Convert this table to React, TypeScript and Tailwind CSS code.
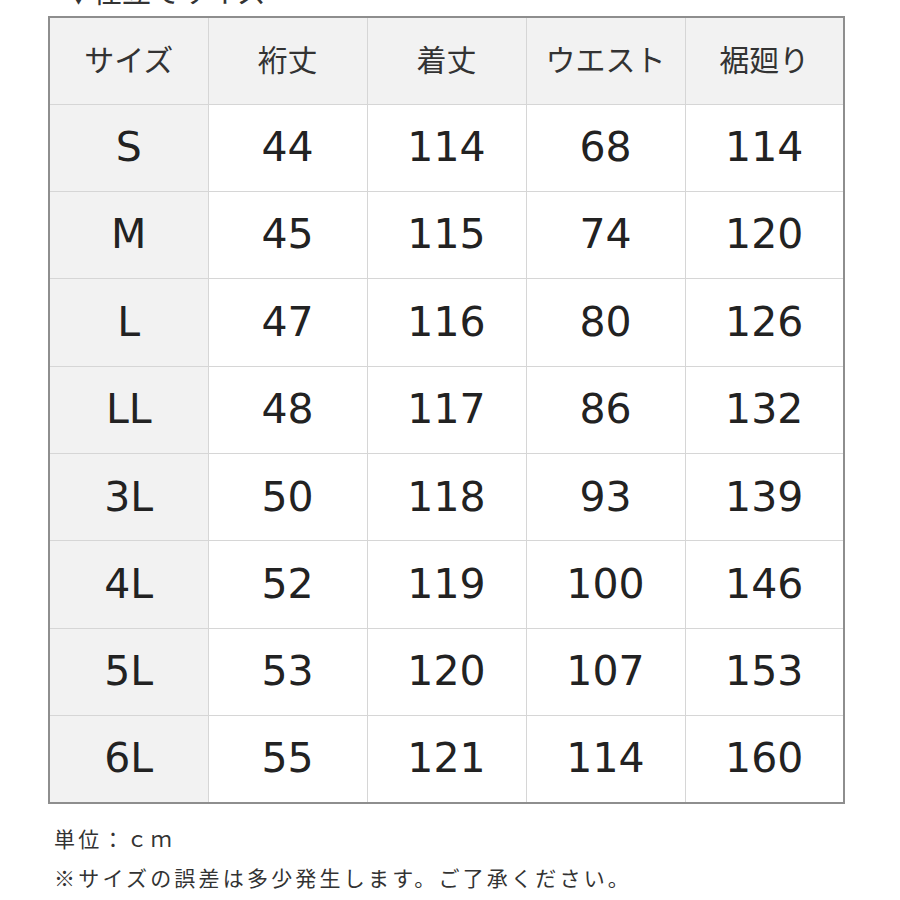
const headers = ['サイズ', '裄丈', '着丈', 'ウエスト', '裾廻り'];

const rows: [string, number, number, number, number][] = [
  ['S', 44, 114, 68, 114],
  ['M', 45, 115, 74, 120],
  ['L', 47, 116, 80, 126],
  ['LL', 48, 117, 86, 132],
  ['3L', 50, 118, 93, 139],
  ['4L', 52, 119, 100, 146],
  ['5L', 53, 120, 107, 153],
  ['6L', 55, 121, 114, 160],
];

const jp = { fontFamily: '"Noto Sans CJK JP", sans-serif' };
const num = { fontFamily: '"DejaVu Sans", "Noto Sans CJK JP", sans-serif' };

export default function App() {
  return (
    <div className="w-[900px] h-[900px] bg-white overflow-hidden text-[#222]">
      {/* title, cut off by the top edge */}
      <div className="pl-[64px] -mt-[28px] h-[44px] text-[29px] leading-[36px] text-[#333]" style={jp}>
        ▼仕立てサイズ
      </div>

      <div className="pl-[48px]">
        <table className="w-[797px] table-fixed border-collapse border-2 border-[#8e8e8e]">
          <thead>
            <tr className="h-[87px] bg-[#f2f2f2]">
              {headers.map((h) => (
                <th
                  key={h}
                  className="border border-[#d6d6d6] text-[30px] font-normal text-[#333] text-center align-middle pb-[4px]"
                  style={jp}
                >
                  {h}
                </th>
              ))}
            </tr>
          </thead>
          <tbody>
            {rows.map((r) => (
              <tr key={r[0]} className="h-[87.4px]">
                {r.map((v, i) => (
                  <td
                    key={i}
                    className={`border border-[#d6d6d6] text-[41px] text-center align-middle ${
                      i === 0 ? 'bg-[#f2f2f2]' : 'bg-white'
                    }`}
                    style={num}
                  >
                    {v}
                  </td>
                ))}
              </tr>
            ))}
          </tbody>
        </table>
      </div>

      {/* notes */}
      <div className="pl-[54px] pt-[15px] text-[21px] leading-[39px] tracking-[3.2px] text-[#333]" style={jp}>
        <p>単位：ｃｍ</p>
        <p>※サイズの誤差は多少発生します。ご了承ください。</p>
      </div>
    </div>
  );
}
